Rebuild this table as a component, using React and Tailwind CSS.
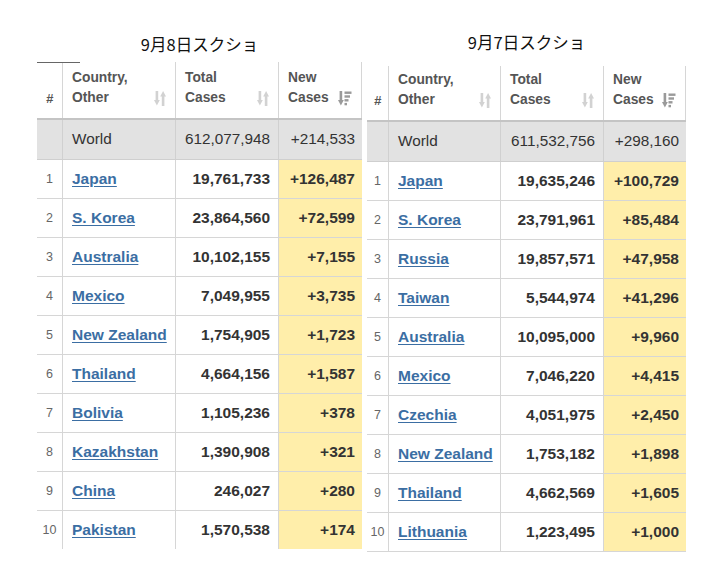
import React from 'react';

const left = {
  title: '9月8日スクショ',
  world: ['612,077,948', '+214,533'],
  rows: [
    ['Japan', '19,761,733', '+126,487'],
    ['S. Korea', '23,864,560', '+72,599'],
    ['Australia', '10,102,155', '+7,155'],
    ['Mexico', '7,049,955', '+3,735'],
    ['New Zealand', '1,754,905', '+1,723'],
    ['Thailand', '4,664,156', '+1,587'],
    ['Bolivia', '1,105,236', '+378'],
    ['Kazakhstan', '1,390,908', '+321'],
    ['China', '246,027', '+280'],
    ['Pakistan', '1,570,538', '+174'],
  ],
};

const right = {
  title: '9月7日スクショ',
  world: ['611,532,756', '+298,160'],
  rows: [
    ['Japan', '19,635,246', '+100,729'],
    ['S. Korea', '23,791,961', '+85,484'],
    ['Russia', '19,857,571', '+47,958'],
    ['Taiwan', '5,544,974', '+41,296'],
    ['Australia', '10,095,000', '+9,960'],
    ['Mexico', '7,046,220', '+4,415'],
    ['Czechia', '4,051,975', '+2,450'],
    ['New Zealand', '1,753,182', '+1,898'],
    ['Thailand', '4,662,569', '+1,605'],
    ['Lithuania', '1,223,495', '+1,000'],
  ],
};

function SortIcon() {
  return (
    <svg width="12" height="15" viewBox="0 0 12 15" className="shrink-0">
      <g fill="#d2d2d2">
        <rect x="1.6" y="0" width="2.6" height="10" />
        <polygon points="0,9 5.8,9 2.9,14.5" />
        <polygon points="6.2,5.5 12,5.5 9.1,0" />
        <rect x="7.8" y="5" width="2.6" height="10" />
      </g>
    </svg>
  );
}

function SortDescIcon() {
  return (
    <svg width="14" height="15" viewBox="0 0 14 15" className="shrink-0">
      <g fill="#9a9a9a">
        <rect x="1.6" y="0" width="2.6" height="10" />
        <polygon points="0,9 5.8,9 2.9,14.5" />
        <rect x="6.5" y="0.5" width="7" height="2.4" />
        <rect x="6.5" y="4.3" width="5.5" height="2.4" />
        <rect x="6.5" y="8.1" width="4" height="2.4" />
        <rect x="6.5" y="11.9" width="2.5" height="2.4" />
      </g>
    </svg>
  );
}

function CovidTable({ data, cols, headH, topGap, padTop, bottomLine, topTick }) {
  const grid = cols;
  return (
    <div className="flex flex-col" style={{ paddingTop: padTop }}>
      <div
        className="h-[22px] flex items-center justify-center text-[16.5px] text-[#111]"
        style={{ fontFamily: '"Noto Sans CJK JP", "Noto Sans", sans-serif', marginBottom: topGap }}
      >
        {data.title}
      </div>
      <div className="relative text-[#333]" style={{ fontFamily: '"Liberation Sans", Arial, sans-serif' }}>
        {topTick && <span className="absolute left-0 top-0 w-[43px] h-px bg-[#666]" />}
        {/* header */}
        <div className="grid border-b-2 border-[#c4c4c4]" style={{ gridTemplateColumns: grid, height: headH }}>
          <div className="border-r border-[#d6d6d6] flex items-end justify-center pb-[10px] text-[13px] font-bold italic text-[#555]">#</div>
          <div className="border-r border-[#d6d6d6] flex items-end justify-between px-[9px] pb-[10px] text-[13.8px] leading-[20px] font-bold text-[#555]">
            <span>Country,<br />Other</span>
            <span className="mb-[2px]"><SortIcon /></span>
          </div>
          <div className="border-r border-[#d6d6d6] flex items-end justify-between px-[9px] pb-[10px] text-[13.8px] leading-[20px] font-bold text-[#555]">
            <span>Total<br />Cases</span>
            <span className="mb-[2px]"><SortIcon /></span>
          </div>
          <div className="border-r border-[#d6d6d6] flex items-end justify-between pl-[9px] pr-[9px] pb-[10px] text-[13.8px] leading-[20px] font-bold text-[#555]">
            <span>New<br />Cases</span>
            <span className="mb-[2px]"><SortDescIcon /></span>
          </div>
        </div>
        {/* world */}
        <div className="grid h-[40px] bg-[#e2e2e2] border-b border-[#cfcfcf] text-[15.3px]" style={{ gridTemplateColumns: grid }}>
          <div className="border-r border-[#d0d0d0]" />
          <div className="border-r border-[#d0d0d0] flex items-center px-[9px]">World</div>
          <div className="border-r border-[#d0d0d0] flex items-center justify-end pr-[8px]">{data.world[0]}</div>
          <div className="flex items-center justify-end pr-[7px]">{data.world[1]}</div>
        </div>
        {data.rows.map((r, i) => {
          const last = i === data.rows.length - 1;
          return (
            <div
              key={r[0]}
              className={
                'grid h-[39px] text-[15.5px] font-bold whitespace-nowrap ' +
                (last && !bottomLine ? 'border-b border-transparent' : 'border-b border-[#d6d6d6]')
              }
              style={{ gridTemplateColumns: grid }}
            >
              <div className="border-r border-[#d6d6d6] flex items-center justify-center text-[12.5px] font-normal text-[#666]">{i + 1}</div>
              <div className="border-r border-[#d6d6d6] flex items-center pl-[9px] overflow-visible">
                <span className="text-[#3b6ea3] underline underline-offset-2">{r[0]}</span>
              </div>
              <div className="border-r border-[#d6d6d6] flex items-center justify-end pr-[8px]">{r[1]}</div>
              <div className="bg-[#ffeeaa] flex items-center justify-end pr-[7px]">{r[2]}</div>
            </div>
          );
        })}
      </div>
    </div>
  );
}

export default function App() {
  return (
    <div className="w-[712px] h-[585px] bg-white flex items-start pl-[37px] gap-[5px] overflow-hidden">
      <CovidTable data={left} cols="26px 113px 103px 83px" headH={58} topGap={7} padTop={33} topTick />
      <CovidTable data={right} cols="22px 112px 103px 82px" headH={56} topGap={13} padTop={31} bottomLine />
    </div>
  );
}
